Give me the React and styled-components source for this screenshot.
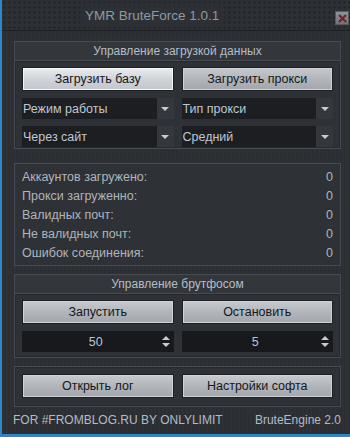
import styled, { createGlobalStyle } from 'styled-components';

const Global = createGlobalStyle`
  html, body { margin: 0; padding: 0; }
  body {
    width: 350px;
    height: 437px;
    overflow: hidden;
    background: #2a87c9;
    font-family: "Liberation Sans", Arial, sans-serif;
  }
`;

const Window = styled.div`
  margin-left: 2px;
  width: 348px;
  height: 434px;
  background-color: #2c2f34;
  background-image: repeating-linear-gradient(90deg, rgba(255,255,255,0.012) 0 2px, rgba(0,0,0,0.03) 2px 4px);
  display: flex;
  flex-direction: column;
  box-sizing: border-box;
`;

const TitleBar = styled.div`
  height: 31px;
  flex-shrink: 0;
  box-sizing: border-box;
  border-bottom: 1px solid #1d1f23;
  background-color: #2d3035;
  background-image: radial-gradient(#222529 1.1px, transparent 1.3px);
  background-size: 5px 5px;
  background-position: 0 0;
  display: flex;
  align-items: center;
  position: relative;
  padding-left: 83px;
`;

const Title = styled.span`
  color: #8e9aa3;
  font-size: 13.5px;
  background: #2d3035;
  box-shadow: 0 0 6px 4px #2d3035;
`;

const Close = styled.div`
  position: absolute;
  right: 1px;
  top: 11px;
  width: 14px;
  height: 14px;
  background: linear-gradient(#909398, #6f7277);
  border: 1px solid #585b60;
  box-sizing: border-box;
  display: flex;
  align-items: center;
  justify-content: center;
`;

const Content = styled.div`
  flex: 1;
  display: flex;
  flex-direction: column;
  padding: 10px 9px 0 12px;
`;

const Group = styled.div`
  display: flex;
  flex-direction: column;
  margin-top: ${(p) => p.$mt || 0}px;
`;

const GroupHeader = styled.div`
  height: 20px;
  box-sizing: border-box;
  border: 1px solid #484b50;
  background: #33363b;
  color: #b4bec6;
  font-size: 12px;
  display: flex;
  align-items: center;
  justify-content: center;
`;

const GroupBody = styled.div`
  border: 1px solid #484b50;
  border-top: ${(p) => (p.$noTop ? 'none' : '1px solid #484b50')};
  background: #2e3136;
  box-shadow: inset 0 0 0 1px #26292d;
  padding: ${(p) => p.$pad || '6px 7px 7px 7px'};
  display: flex;
  flex-direction: column;
  gap: ${(p) => p.$gap || 0}px;
`;

const Row = styled.div`
  display: grid;
  grid-template-columns: 1fr 1fr;
  column-gap: 8px;
`;

const Button = styled.div`
  height: 24px;
  box-sizing: border-box;
  border: 1px solid #1d1f22;
  border-radius: 1px;
  background: ${(p) =>
    p.$active
      ? 'linear-gradient(#eceef1, #d0d3d8 50%, #c2c6cb)'
      : 'linear-gradient(#c7cacf, #b2b6bb 50%, #a2a6ac)'};
  box-shadow: inset 0 0 0 1px ${(p) => (p.$active ? '#f4f5f7' : '#cfd2d6')};
  color: #15171a;
  font-size: 12.5px;
  display: flex;
  align-items: center;
  justify-content: center;
`;

const Select = styled.div`
  height: 21px;
  box-sizing: border-box;
  background: #1c1e22;
  display: flex;
  align-items: stretch;
`;

const SelectText = styled.div`
  flex: 1;
  color: #bcc8d2;
  font-size: 12.5px;
  display: flex;
  align-items: center;
  padding-left: 1px;
`;

const ArrowBox = styled.div`
  width: 17px;
  background: #34373c;
  display: flex;
  align-items: center;
  justify-content: center;
`;

const Arrow = styled.div`
  width: 0;
  height: 0;
  border-left: 4px solid transparent;
  border-right: 4px solid transparent;
  border-top: 4px solid #c8ccd1;
`;

const Stats = styled.div`
  margin-top: 14px;
  border: 1px solid #484b50;
  background: #2e3136;
  padding: 3px 7px 3px 7px;
  display: flex;
  flex-direction: column;
`;

const StatRow = styled.div`
  height: 19px;
  display: flex;
  align-items: center;
  justify-content: space-between;
  color: #aeb5bc;
  font-size: 12.5px;
`;

const Spin = styled.div`
  height: 21px;
  background: #17191c;
  display: flex;
  align-items: center;
`;

const SpinValue = styled.div`
  flex: 1;
  text-align: center;
  color: #b7c7d6;
  font-size: 12.5px;
  padding-left: 12px;
`;

const SpinArrows = styled.div`
  width: 16px;
  display: flex;
  flex-direction: column;
  align-items: center;
  gap: 3px;
`;

const Tri = styled.div`
  width: 0;
  height: 0;
  border-left: 4px solid transparent;
  border-right: 4px solid transparent;
  ${(p) => (p.$up ? 'border-bottom: 4px solid #c8ccd1;' : 'border-top: 4px solid #c8ccd1;')}
`;

const Footer = styled.div`
  margin-top: 6px;
  display: flex;
  justify-content: space-between;
  align-items: center;
  height: 14px;
  color: #b3bcc4;
  font-size: 12px;
  margin-left: -1px;
`;

function Dropdown({ text }) {
  return (
    <Select>
      <SelectText>{text}</SelectText>
      <ArrowBox>
        <Arrow />
      </ArrowBox>
    </Select>
  );
}

function SpinBox({ value }) {
  return (
    <Spin>
      <SpinValue>{value}</SpinValue>
      <SpinArrows>
        <Tri $up />
        <Tri />
      </SpinArrows>
    </Spin>
  );
}

const stats = [
  'Аккаунтов загружено:',
  'Прокси загруженно:',
  'Валидных почт:',
  'Не валидных почт:',
  'Ошибок соединения:',
];

export default function App() {
  return (
    <>
      <Global />
      <Window>
        <TitleBar>
          <Title>YMR BruteForce 1.0.1</Title>
          <Close>
            <svg width="9" height="9" viewBox="0 0 9 9">
              <path d="M1 1 L8 8 M8 1 L1 8" stroke="#7a1c22" strokeWidth="2" />
            </svg>
          </Close>
        </TitleBar>
        <Content>
          <Group>
            <GroupHeader>Управление загрузкой данных</GroupHeader>
            <GroupBody $noTop $gap={7} $pad="6px 7px 1px 7px">
              <Row>
                <Button $active>Загрузить базу</Button>
                <Button>Загрузить прокси</Button>
              </Row>
              <Row>
                <Dropdown text="Режим работы" />
                <Dropdown text="Тип прокси" />
              </Row>
              <Row>
                <Dropdown text="Через сайт" />
                <Dropdown text="Средний" />
              </Row>
            </GroupBody>
          </Group>

          <Stats>
            {stats.map((s) => (
              <StatRow key={s}>
                <span>{s}</span>
                <span>0</span>
              </StatRow>
            ))}
          </Stats>

          <Group $mt={8}>
            <GroupHeader>Управление брутфосом</GroupHeader>
            <GroupBody $noTop $gap={7} $pad="6px 7px 5px 7px">
              <Row>
                <Button>Запустить</Button>
                <Button>Остановить</Button>
              </Row>
              <Row>
                <SpinBox value="50" />
                <SpinBox value="5" />
              </Row>
            </GroupBody>
          </Group>

          <Group $mt={8}>
            <GroupBody $pad="7px 7px 8px 7px">
              <Row>
                <Button>Открыть лог</Button>
                <Button>Настройки софта</Button>
              </Row>
            </GroupBody>
          </Group>

          <Footer>
            <span>FOR #FROMBLOG.RU BY ONLYLIMIT</span>
            <span>BruteEngine 2.0</span>
          </Footer>
        </Content>
      </Window>
    </>
  );
}
